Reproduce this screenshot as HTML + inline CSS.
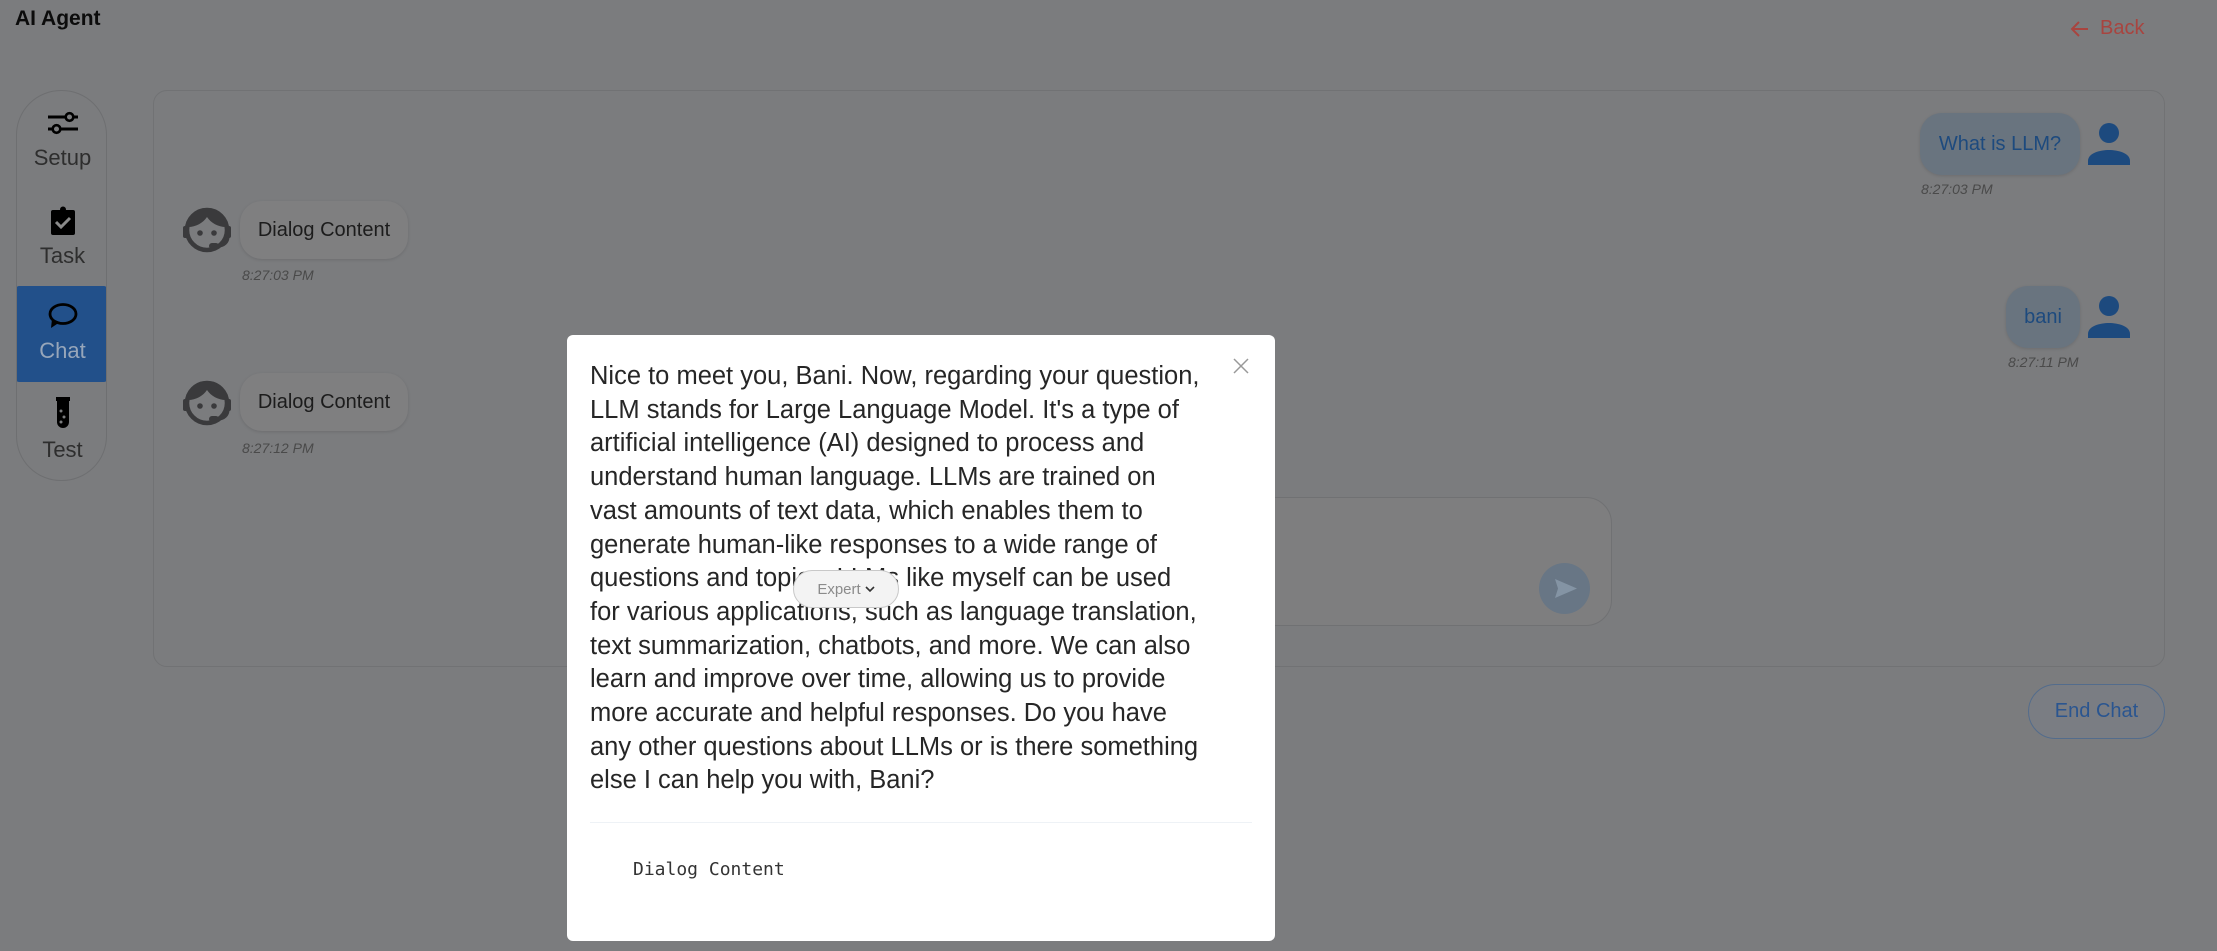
<!DOCTYPE html>
<html><head><meta charset="utf-8">
<style>
*{box-sizing:border-box;margin:0;padding:0}
body{width:2217px;height:951px;overflow:hidden;background:#7b7c7e;font-family:"Liberation Sans",Arial,sans-serif;position:relative}
.abs{position:absolute}
.title{left:15px;top:7px;font-size:21px;font-weight:bold;color:#0c0c0c}
.back{left:2070px;top:17px;color:#a8443f;font-size:20px;display:flex;align-items:center;gap:10px}
.side{left:16px;top:90px;width:91px;height:391px;border:1.5px solid #6e6f71;border-radius:45px;overflow:hidden}
.item{position:absolute;left:0;width:91px;text-align:center;font-size:22px;color:#2e2e2e}
.item svg{display:block;margin:0 auto}
.sel{left:16px;top:286px;width:91px;height:96px;background:#22508a;border-radius:3px}
.panel{left:153px;top:90px;width:2012px;height:577px;border:1.5px solid #717274;border-radius:14px}
.bub{background:#7f7f80;border-radius:22px;font-size:20px;color:#1c1c1c;display:flex;align-items:center;justify-content:center;box-shadow:0 1px 3px rgba(0,0,0,.12)}
.ub{background:#69747f;color:#1d4a7e}
.ts{font-size:14px;font-style:italic;color:#4a4a4a}
.input{left:1100px;top:497px;width:512px;height:129px;border:1.5px solid #707173;border-radius:26px;background:#7e7e7f}
.send{left:1539px;top:563px;width:51px;height:51px;border-radius:50%;background:#687685}
.end{left:2028px;top:684px;width:137px;height:55px;border:1.5px solid #536c8c;border-radius:28px;color:#2a5590;font-size:20px;display:flex;align-items:center;justify-content:center;background:#7a7d83}
.modal{left:567px;top:335px;width:708px;height:606px;background:#fff;border-radius:6px}
.mt{left:590px;top:360px;font-size:25.5px;line-height:33.7px;color:#262626;white-space:nowrap}
.close{left:1233px;top:358px}
.div{left:590px;top:822px;width:662px;height:1px;background:#eef2f6}
.mono{left:633px;top:859px;font-family:"DejaVu Sans Mono","Liberation Mono",monospace;font-size:18px;color:#333}
.expert{left:793px;top:570px;width:106px;height:38px;border:1px solid #c8c8c8;border-radius:19px;background:#f3f3f3;color:#8b8b8b;font-size:15px;display:flex;align-items:center;justify-content:center;gap:4px}
</style></head><body>
<div class="abs title">AI Agent</div>
<div class="abs back"><svg width="20" height="18" viewBox="0 0 20 18"><path d="M18 9H3M9 2L2 9l7 7" stroke="#a8443f" stroke-width="2" fill="none"/></svg><span>Back</span></div>

<div class="abs sel"></div>
<div class="abs side">
 <div class="item" style="top:18px"><svg width="32" height="28" viewBox="0 0 32 28"><path d="M1 8h18M26 8h5M1 20h5M13 20h18" stroke="#000" stroke-width="3"/><circle cx="22.5" cy="8" r="3.8" fill="none" stroke="#000" stroke-width="2.6"/><circle cx="9.5" cy="20" r="3.8" fill="none" stroke="#000" stroke-width="2.6"/></svg><div style="margin-top:8px">Setup</div></div>
 <div class="item" style="top:115px"><svg width="28" height="30" viewBox="0 0 28 30"><rect x="2" y="4" width="24" height="25" rx="2" fill="#000"/><circle cx="14" cy="3.5" r="3" fill="#000"/><path d="M7 16l5 5 9-9" stroke="#8a8a8a" stroke-width="3" fill="none"/></svg><div style="margin-top:7px">Task</div></div>
 <div class="item" style="top:211px"><svg width="32" height="28" viewBox="0 0 32 28"><ellipse cx="16" cy="12" rx="13" ry="9.5" fill="none" stroke="#000" stroke-width="2.8"/><path d="M5 17l-1 9 9-6z" fill="#000"/></svg><div style="margin-top:8px;color:#97a6ba">Chat</div></div>
 <div class="item" style="top:306px"><svg width="20" height="32" viewBox="0 0 20 32"><rect x="3" y="0" width="14" height="4" fill="#000"/><path d="M4 4h12v21a6 6 0 0 1-12 0z" fill="#000"/><circle cx="8" cy="14" r="1.5" fill="#7b7c7e"/><circle cx="11" cy="20" r="1.5" fill="#7b7c7e"/><circle cx="8" cy="25" r="1.5" fill="#7b7c7e"/></svg><div style="margin-top:8px">Test</div></div>
</div>

<div class="abs panel"></div>

<svg class="abs" style="left:181px;top:205px" width="52" height="50" viewBox="0 0 52 50"><circle cx="26" cy="25" r="20" fill="none" stroke="#3a3a3c" stroke-width="4.5"/><path d="M7 22C8 12 16 5 26 5s18 7 19 17c-8 0-15-4-19-10-4 6-11 10-19 10z" fill="#3a3a3c"/><circle cx="19" cy="28" r="2.8" fill="#3a3a3c"/><circle cx="33" cy="28" r="2.8" fill="#3a3a3c"/><rect x="2" y="21" width="6" height="12" rx="2" fill="#3a3a3c"/><rect x="44" y="21" width="6" height="12" rx="2" fill="#3a3a3c"/><path d="M47 32c0 5-4 9-10 9" stroke="#3a3a3c" stroke-width="3" fill="none"/><rect x="28" y="38" width="10" height="6" rx="3" fill="#3a3a3c"/></svg>
<div class="abs bub" style="left:240px;top:201px;width:168px;height:58px">Dialog Content</div>
<div class="abs ts" style="left:242px;top:267px">8:27:03 PM</div>

<svg class="abs" style="left:181px;top:378px" width="52" height="50" viewBox="0 0 52 50"><circle cx="26" cy="25" r="20" fill="none" stroke="#3a3a3c" stroke-width="4.5"/><path d="M7 22C8 12 16 5 26 5s18 7 19 17c-8 0-15-4-19-10-4 6-11 10-19 10z" fill="#3a3a3c"/><circle cx="19" cy="28" r="2.8" fill="#3a3a3c"/><circle cx="33" cy="28" r="2.8" fill="#3a3a3c"/><rect x="2" y="21" width="6" height="12" rx="2" fill="#3a3a3c"/><rect x="44" y="21" width="6" height="12" rx="2" fill="#3a3a3c"/><path d="M47 32c0 5-4 9-10 9" stroke="#3a3a3c" stroke-width="3" fill="none"/><rect x="28" y="38" width="10" height="6" rx="3" fill="#3a3a3c"/></svg>
<div class="abs bub" style="left:240px;top:373px;width:168px;height:58px">Dialog Content</div>
<div class="abs ts" style="left:242px;top:440px">8:27:12 PM</div>

<div class="abs bub ub" style="left:1920px;top:113px;width:160px;height:62px">What is LLM?</div>
<svg class="abs" style="left:2088px;top:123px" width="42" height="42" viewBox="0 0 42 42"><circle cx="21" cy="10" r="10" fill="#1d4a7e"/><path d="M0 42v-4c0-8 12-11 21-11s21 3 21 11v4z" fill="#1d4a7e"/></svg>
<div class="abs ts" style="left:1921px;top:181px">8:27:03 PM</div>

<div class="abs bub ub" style="left:2006px;top:286px;width:74px;height:62px">bani</div>
<svg class="abs" style="left:2088px;top:296px" width="42" height="42" viewBox="0 0 42 42"><circle cx="21" cy="10" r="10" fill="#1d4a7e"/><path d="M0 42v-4c0-8 12-11 21-11s21 3 21 11v4z" fill="#1d4a7e"/></svg>
<div class="abs ts" style="left:2008px;top:354px">8:27:11 PM</div>

<div class="abs input"></div>
<div class="abs send"><svg width="51" height="51" viewBox="0 0 51 51"><path d="M16 16l22 9.5-22 9.5 3-9.5z" fill="#8494a4"/></svg></div>
<div class="abs end">End Chat</div>

<div class="abs modal"></div>
<div class="abs mt">Nice to meet you, Bani. Now, regarding your question,<br>LLM stands for Large Language Model. It's a type of<br>artificial intelligence (AI) designed to process and<br>understand human language. LLMs are trained on<br>vast amounts of text data, which enables them to<br>generate human-like responses to a wide range of<br>questions and topics. LLMs like myself can be used<br>for various applications, such as language translation,<br>text summarization, chatbots, and more. We can also<br>learn and improve over time, allowing us to provide<br>more accurate and helpful responses. Do you have<br>any other questions about LLMs or is there something<br>else I can help you with, Bani?</div>
<svg class="abs close" width="16" height="16" viewBox="0 0 16 16"><path d="M1 1l14 14M15 1L1 15" stroke="#999" stroke-width="1.5"/></svg>
<div class="abs div"></div>
<div class="abs mono">Dialog Content</div>
<div class="abs expert"><span>Expert</span><svg width="10" height="8" viewBox="0 0 10 8"><path d="M1 2l4 4 4-4" stroke="#333" stroke-width="1.6" fill="none"/></svg></div>
</body></html>
